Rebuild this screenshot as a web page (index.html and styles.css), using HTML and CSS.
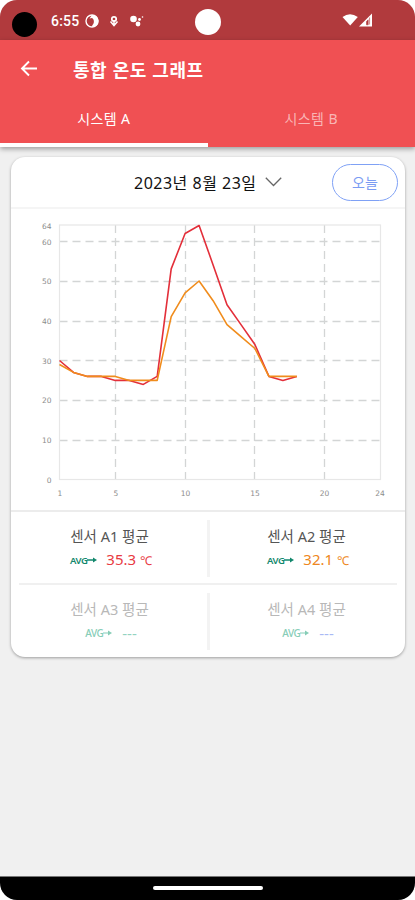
FILE: index.html
```
<!DOCTYPE html>
<html lang="ko">
<head>
    <meta charset="UTF-8">
    <meta name="viewport" content="width=device-width, initial-scale=1.0">
    <title>통합 온도 그래프</title>
    <link rel="stylesheet" href="styles.css">
</head>
<body>
<div class="phone">
    <header class="statusbar">
        <span class="dot"></span>
        <span class="time">6:55</span>
        <svg class="status-icons" width="62" height="18" viewBox="0 0 62 18">
            <circle cx="8" cy="8" r="6" fill="none" stroke="#fff" stroke-width="1.400"/>
            <path d="M8 2a6 6 0 0 1 1 12c-1.500 0-1-1.500.3-3C10.500 9 10 6 8 5L5.500 5.500z" fill="#fff"/>
            <circle cx="30" cy="6" r="2.200" fill="none" stroke="#fff" stroke-width="1.700"/>
            <path d="M26.500 8.500l3.500 4 3.500-4M30 7v6" fill="none" stroke="#fff" stroke-width="1.500"/>
            <circle cx="49.500" cy="6" r="3.300" fill="#fff"/>
            <circle cx="54" cy="11" r="2.400" fill="#fff"/>
            <circle cx="55.500" cy="6.500" r="1.400" fill="#fff"/>
            <circle cx="58.500" cy="4" r=".8" fill="#fff"/>
        </svg>
        <span class="camera"></span>
        <svg class="signal" width="34" height="18" viewBox="0 0 34 18">
            <path d="M.5 6Q8 .3 15.800 6L8.200 14.500z" fill="#fff"/>
            <path d="M17 15.500L30 2.500v13z" fill="#fff"/>
            <path d="M24.500 10.500l1.700-1.700v5h-1.700zM27.600 6.500v7" fill="#b13a3d" stroke="#b13a3d" stroke-width=".6"/>
        </svg>
    </header>

    <div class="appbar">
        <div class="titlebar">
            <svg class="back" width="18" height="18" viewBox="0 0 18 18">
                <path d="M9 1.500L2 8.500l7 7M2 8.500h15" fill="none" stroke="#fff" stroke-width="1.900"/>
            </svg>
            <h1>통합 온도 그래프</h1>
        </div>
        <nav class="tabs">
            <a class="tab active">시스템 A</a>
            <a class="tab">시스템 B</a>
        </nav>
    </div>

    <main>
        <section class="card">
            <div class="date-row">
                <span class="date">2023년 8월 23일</span>
                <svg class="chevron" width="17" height="10" viewBox="0 0 17 10">
                    <path d="M.8 .8l7.700 7.700L16.200 .8" fill="none" stroke="#666" stroke-width="1.300"/>
                </svg>
                <button class="today">오늘</button>
            </div>

            <svg class="chart" width="395" height="303" viewBox="11 209 395 303">
                <g class="grid">
                    <path d="M59.500 241.500H380.500M59.500 281.500H380.500M59.500 321.500H380.500M59.500 360.500H380.500M59.500 400.500H380.500M59.500 440.500H380.500"/>
                    <path d="M115.500 225V480M185.500 225V480M254.500 225V480M324.500 225V480"/>
                </g>
                <rect class="frame" x="59.500" y="225" width="321" height="254.500"/>
                <g class="y-labels">
                    <text x="51.500" y="228.500">64</text>
                    <text x="51.500" y="244.500">60</text>
                    <text x="51.500" y="284">50</text>
                    <text x="51.500" y="323.500">40</text>
                    <text x="51.500" y="363.500">30</text>
                    <text x="51.500" y="403">20</text>
                    <text x="51.500" y="443">10</text>
                    <text x="51.500" y="482.500">0</text>
                </g>
                <g class="x-labels">
                    <text x="60" y="496">1</text>
                    <text x="116" y="496">5</text>
                    <text x="185.500" y="496">10</text>
                    <text x="255" y="496">15</text>
                    <text x="324.500" y="496">20</text>
                    <text x="380" y="496">24</text>
                </g>
                <polyline class="line red" points="59.500,360.500 73.500,372.400 87.400,376.400 101.400,376.400 115.300,380.400 129.300,380.400 143.300,384.400 157.200,376.400 171.200,268.900 185.100,233.500 199.100,225.500 213.100,264.900 227,304.700 241,324.600 254.900,344.500 268.900,376.400 282.900,380.400 296.800,376.400"/>
                <polyline class="line orange" points="59.500,364.500 73.500,372.400 87.400,376.400 101.400,376.400 115.300,376.400 129.300,380.400 143.300,380.400 157.200,380.400 171.200,316.700 185.100,292.800 199.100,281 213.100,300.700 227,324.600 241,336.600 254.900,348.500 268.900,376.400 282.900,376.400 296.800,376.400"/>
            </svg>

            <div class="sensors">
                <div class="sensor">
                    <h2>센서 A1 평균</h2>
                    <p><span class="avg">AVG<svg width="10" height="8" viewBox="0 0 10 8"><path d="M0 4h7" stroke="currentColor" stroke-width="1.500"/><path d="M6 1.500l4 2.500-4 2.500z" fill="currentColor"/></svg></span><span class="value red-text">35.3 <small>℃</small></span></p>
                </div>
                <div class="sensor">
                    <h2>센서 A2 평균</h2>
                    <p><span class="avg">AVG<svg width="10" height="8" viewBox="0 0 10 8"><path d="M0 4h7" stroke="currentColor" stroke-width="1.500"/><path d="M6 1.500l4 2.500-4 2.500z" fill="currentColor"/></svg></span><span class="value orange-text">32.1 <small>℃</small></span></p>
                </div>
                <div class="sensor off">
                    <h2>센서 A3 평균</h2>
                    <p><span class="avg">AVG<svg width="10" height="8" viewBox="0 0 10 8"><path d="M0 4h6" stroke="currentColor" stroke-width="1.200"/><path d="M5 1.500l4 2.500-4 2.500z" fill="currentColor"/></svg></span><span class="value green-text">---</span></p>
                </div>
                <div class="sensor off">
                    <h2>센서 A4 평균</h2>
                    <p><span class="avg">AVG<svg width="10" height="8" viewBox="0 0 10 8"><path d="M0 4h6" stroke="currentColor" stroke-width="1.200"/><path d="M5 1.500l4 2.500-4 2.500z" fill="currentColor"/></svg></span><span class="value blue-text">---</span></p>
                </div>
            </div>
        </section>
    </main>

    <footer class="navbar"><span class="handle"></span></footer>
</div>
</body>
</html>
```
FILE: styles.css
```
* {
    box-sizing: border-box;
}

body {
    margin: 0;
    background: #fff;
    font-family: "Noto Sans", "Noto Sans CJK KR", sans-serif;
}

h1, h2, p {
    margin: 0;
}

.phone {
    display: flex;
    flex-direction: column;
    width: 415px;
    height: 900px;
    overflow: hidden;
    border-radius: 17px;
    background: #f0f0f0;
}

/* status bar */
.statusbar {
    position: relative;
    display: flex;
    align-items: center;
    height: 40px;
    padding-left: 12px;
    background: #b13a3d;
    color: #fff;
}

.dot {
    width: 25px;
    height: 25px;
    margin-top: 8px;
    border-radius: 50%;
    background: #000;
}

.time {
    margin-left: 14px;
    margin-top: 2px;
    font-family: Roboto, sans-serif;
    font-size: 14px;
    font-weight: 500;
    letter-spacing: 0.2px;
}

.status-icons {
    margin-left: 5px;
    margin-top: 4px;
}

.camera {
    position: absolute;
    left: 195px;
    top: 9px;
    width: 26px;
    height: 26px;
    border-radius: 50%;
    background: #fff;
}

.signal {
    margin-left: auto;
    margin-right: 39px;
}

/* app bar */
.appbar {
    position: relative;
    flex-shrink: 0;
    height: 107px;
    background: #f05053;
    color: #fff;
    box-shadow: 0 2px 5px rgba(0, 0, 0, 0.35);
}

.titlebar {
    display: flex;
    align-items: center;
    height: 57px;
    padding-left: 20px;
}

.titlebar h1 {
    margin-left: 35px;
    font-family: "Noto Sans CJK KR", sans-serif;
    font-size: 18px;
    font-weight: 700;
    line-height: 24px;
    letter-spacing: 0.5px;
    white-space: nowrap;
}

.tabs {
    display: flex;
    height: 50px;
}

.tab {
    flex: 1;
    padding-top: 11px;
    border-bottom: 4px solid transparent;
    font-size: 14px;
    line-height: 22px;
    letter-spacing: 0.4px;
    text-align: center;
    color: #f9b5b5;
}

.tab.active {
    border-bottom-color: #fff;
    color: #fff;
}

/* card */
main {
    flex: 1;
    padding: 10px 10px 0 11px;
}

.card {
    height: 500px;
    overflow: hidden;
    border-radius: 14px;
    background: #fff;
    box-shadow: 0 1px 3px rgba(0, 0, 0, 0.35);
}

.date-row {
    position: relative;
    display: flex;
    align-items: center;
    height: 52px;
    padding-left: 123px;
    border-bottom: 2px solid #f5f5f5;
}

.date {
    font-size: 16px;
    letter-spacing: 0.5px;
    color: #111;
    white-space: nowrap;
}

.chevron {
    margin-left: 8px;
}

.today {
    width: 66px;
    height: 37px;
    margin-left: auto;
    margin-right: 7px;
    padding: 0;
    border: 1.5px solid #7fa1f5;
    border-radius: 19px;
    background: #fff;
    font-family: "Noto Sans CJK KR", sans-serif;
    font-size: 14px;
    color: #7b9cf3;
}

.chart {
    display: block;
}

.grid path {
    fill: none;
    stroke: #d3d5d5;
    stroke-width: 1.3;
    stroke-dasharray: 8 5;
}

.frame {
    fill: none;
    stroke: #e7e7e7;
    stroke-width: 1.2;
}

.y-labels, .x-labels {
    font-family: "DejaVu Sans", sans-serif;
    font-size: 7.5px;
    fill: #8c8c8c;
}

.y-labels {
    text-anchor: end;
}

.x-labels {
    text-anchor: middle;
}

.line {
    fill: none;
    stroke-width: 1.6;
    stroke-linejoin: round;
}

.red {
    stroke: #e32f3a;
}

.orange {
    stroke: #f08c1c;
}

/* sensor averages */
.sensors {
    display: grid;
    grid-template-columns: 1fr 1fr;
    grid-template-rows: 73px 72px;
    border-top: 2px solid #ececec;
    margin-top: -2px;
}

.sensor {
    position: relative;
    padding-top: 13px;
    text-align: center;
}

.sensor:nth-child(odd) {
    margin-left: 8px;
    padding-right: 8px;
}

.sensor:nth-child(even) {
    margin-right: 8px;
    padding-left: 8px;
}

.sensor:nth-child(-n+2) {
    border-bottom: 2px solid #f0f0f0;
}

.sensor:nth-child(odd)::after {
    content: "";
    position: absolute;
    right: -2px;
    top: 8px;
    width: 3px;
    height: 57px;
    background: #f3f3f3;
}

.sensor h2 {
    font-size: 14.5px;
    font-weight: 400;
    line-height: 22px;
    color: #555;
}

.sensor p {
    display: flex;
    justify-content: center;
    align-items: center;
    height: 26px;
    padding-left: 3px;
}

.avg {
    display: flex;
    align-items: center;
    margin-right: 9px;
    font-size: 9.5px;
    font-weight: 600;
    letter-spacing: -0.5px;
    color: #12876c;
}

.value {
    font-size: 15px;
    line-height: 20px;
    white-space: nowrap;
}

.value small {
    font-size: 12px;
}

.red-text {
    color: #e83b43;
}

.orange-text {
    color: #ee8620;
}

.off h2 {
    color: #b8b8b8;
}

.off .avg {
    font-size: 10px;
    font-weight: 500;
    color: #86cdb7;
}

.green-text {
    color: #93d3c1;
}

.blue-text {
    color: #a9b9f5;
}

/* bottom gesture bar */
.navbar {
    display: flex;
    justify-content: center;
    height: 24px;
    padding-top: 9px;
    border-top: 1px solid #777;
    background: #000;
}

.handle {
    width: 110px;
    height: 4px;
    border-radius: 2px;
    background: #fff;
}
```
